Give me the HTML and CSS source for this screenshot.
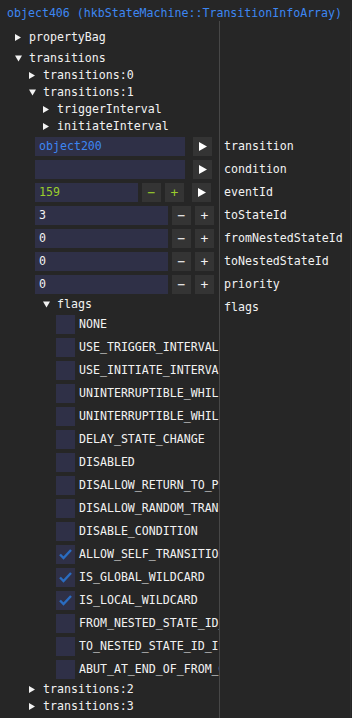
FILE: index.html
```html
<!DOCTYPE html>
<html lang="en">
<head>
  <meta charset="UTF-8" />
  <title>TransitionInfoArray</title>
  <link rel="stylesheet" href="styles.css">
</head>
<body>
  <div class="title">object406 (hkbStateMachine::TransitionInfoArray)</div>

  <div class="table">
    <div class="row first">
      <div class="l"><div class="node lv0"><svg class="tri" width="7" height="7" viewBox="0 0 7 7"><polygon points="0,0 6,3.5 0,7"/></svg>propertyBag</div></div>
      <div class="r"></div>
    </div>
    <div class="row">
      <div class="l"><div class="node lv0"><svg class="tri" width="7" height="7" viewBox="0 0 7 7"><polygon points="0,0.5 7,0.5 3.5,6.5"/></svg>transitions</div></div>
      <div class="r"></div>
    </div>
    <div class="row">
      <div class="l"><div class="node lv1"><svg class="tri" width="7" height="7" viewBox="0 0 7 7"><polygon points="0,0 6,3.5 0,7"/></svg>transitions:0</div></div>
      <div class="r"></div>
    </div>
    <div class="row">
      <div class="l"><div class="node lv1"><svg class="tri" width="7" height="7" viewBox="0 0 7 7"><polygon points="0,0.5 7,0.5 3.5,6.5"/></svg>transitions:1</div></div>
      <div class="r"></div>
    </div>
    <div class="row">
      <div class="l"><div class="node lv2"><svg class="tri" width="7" height="7" viewBox="0 0 7 7"><polygon points="0,0 6,3.5 0,7"/></svg>triggerInterval</div></div>
      <div class="r"></div>
    </div>
    <div class="row">
      <div class="l"><div class="node lv2"><svg class="tri" width="7" height="7" viewBox="0 0 7 7"><polygon points="0,0 6,3.5 0,7"/></svg>initiateInterval</div></div>
      <div class="r"></div>
    </div>

    <!-- fields -->
    <div class="row">
      <div class="l"><div class="field">
        <div class="input link w-long">object200</div>
        <div class="btn play"><svg width="8" height="9" viewBox="0 0 8 9"><polygon points="0,0 8,4.5 0,9"/></svg></div>
      </div></div>
      <div class="r label">transition</div>
    </div>
    <div class="row">
      <div class="l"><div class="field">
        <div class="input w-long"></div>
        <div class="btn play"><svg width="8" height="9" viewBox="0 0 8 9"><polygon points="0,0 8,4.5 0,9"/></svg></div>
      </div></div>
      <div class="r label">condition</div>
    </div>
    <div class="row">
      <div class="l"><div class="field">
        <div class="input num w-short">159</div>
        <div class="btn num">−</div>
        <div class="btn num">+</div>
        <div class="btn play"><svg width="8" height="9" viewBox="0 0 8 9"><polygon points="0,0 8,4.5 0,9"/></svg></div>
      </div></div>
      <div class="r label">eventId</div>
    </div>
    <div class="row">
      <div class="l"><div class="field">
        <div class="input w-mid">3</div>
        <div class="btn">−</div>
        <div class="btn">+</div>
      </div></div>
      <div class="r label">toStateId</div>
    </div>
    <div class="row">
      <div class="l"><div class="field">
        <div class="input w-mid">0</div>
        <div class="btn">−</div>
        <div class="btn">+</div>
      </div></div>
      <div class="r label">fromNestedStateId</div>
    </div>
    <div class="row">
      <div class="l"><div class="field">
        <div class="input w-mid">0</div>
        <div class="btn">−</div>
        <div class="btn">+</div>
      </div></div>
      <div class="r label">toNestedStateId</div>
    </div>
    <div class="row">
      <div class="l"><div class="field">
        <div class="input w-mid">0</div>
        <div class="btn">−</div>
        <div class="btn">+</div>
      </div></div>
      <div class="r label">priority</div>
    </div>

    <!-- flags -->
    <div class="row">
      <div class="l"><div class="node lv2"><svg class="tri" width="7" height="7" viewBox="0 0 7 7"><polygon points="0,0.5 7,0.5 3.5,6.5"/></svg>flags</div></div>
      <div class="r flags-label">flags</div>
    </div>
    <div class="row"><div class="l"><div class="check"><span class="box"></span>NONE</div></div><div class="r"></div></div>
    <div class="row"><div class="l"><div class="check"><span class="box"></span>USE_TRIGGER_INTERVAL</div></div><div class="r"></div></div>
    <div class="row"><div class="l"><div class="check"><span class="box"></span>USE_INITIATE_INTERVAL</div></div><div class="r"></div></div>
    <div class="row"><div class="l"><div class="check"><span class="box"></span>UNINTERRUPTIBLE_WHILE_PLAYING</div></div><div class="r"></div></div>
    <div class="row"><div class="l"><div class="check"><span class="box"></span>UNINTERRUPTIBLE_WHILE_DELAYED</div></div><div class="r"></div></div>
    <div class="row"><div class="l"><div class="check"><span class="box"></span>DELAY_STATE_CHANGE</div></div><div class="r"></div></div>
    <div class="row"><div class="l"><div class="check"><span class="box"></span>DISABLED</div></div><div class="r"></div></div>
    <div class="row"><div class="l"><div class="check"><span class="box"></span>DISALLOW_RETURN_TO_PREVIOUS_STATE</div></div><div class="r"></div></div>
    <div class="row"><div class="l"><div class="check"><span class="box"></span>DISALLOW_RANDOM_TRANSITION</div></div><div class="r"></div></div>
    <div class="row"><div class="l"><div class="check"><span class="box"></span>DISABLE_CONDITION</div></div><div class="r"></div></div>
    <div class="row"><div class="l"><div class="check"><span class="box"><svg width="19" height="19" viewBox="0 0 19 19"><polyline points="4,9.5 7.5,13 15,5"/></svg></span>ALLOW_SELF_TRANSITION_BY_TRANSITION_FROM_ANY_STATE</div></div><div class="r"></div></div>
    <div class="row"><div class="l"><div class="check"><span class="box"><svg width="19" height="19" viewBox="0 0 19 19"><polyline points="4,9.5 7.5,13 15,5"/></svg></span>IS_GLOBAL_WILDCARD</div></div><div class="r"></div></div>
    <div class="row"><div class="l"><div class="check"><span class="box"><svg width="19" height="19" viewBox="0 0 19 19"><polyline points="4,9.5 7.5,13 15,5"/></svg></span>IS_LOCAL_WILDCARD</div></div><div class="r"></div></div>
    <div class="row"><div class="l"><div class="check"><span class="box"></span>FROM_NESTED_STATE_ID_IS_LOCAL</div></div><div class="r"></div></div>
    <div class="row"><div class="l"><div class="check"><span class="box"></span>TO_NESTED_STATE_ID_IS_LOCAL</div></div><div class="r"></div></div>
    <div class="row"><div class="l"><div class="check"><span class="box"></span>ABUT_AT_END_OF_FROM_GENERATOR</div></div><div class="r"></div></div>

    <div class="row">
      <div class="l"><div class="node lv1"><svg class="tri" width="7" height="7" viewBox="0 0 7 7"><polygon points="0,0 6,3.5 0,7"/></svg>transitions:2</div></div>
      <div class="r"></div>
    </div>
    <div class="row">
      <div class="l"><div class="node lv1"><svg class="tri" width="7" height="7" viewBox="0 0 7 7"><polygon points="0,0 6,3.5 0,7"/></svg>transitions:3</div></div>
      <div class="r"></div>
    </div>
    <div class="row fill">
      <div class="l"></div>
      <div class="r"></div>
    </div>
  </div>
</body>
</html>
```

FILE: styles.css
```css
:root {
  --bg-color: #262626;
  --text-color: #f2f2f2;
  --frame-bg: #2f3047;
  --button-bg: #343434;
  --column-line: #474747;
  --link-color: #3d86f2;
  --num-color: #9acd2c;
  --check-color: #2a6cc0;
}

* {
  box-sizing: border-box;
  margin: 0;
  padding: 0;
}

body {
  width: 352px;
  height: 718px;
  overflow: hidden;
  display: flex;
  flex-direction: column;
  background-color: var(--bg-color);
  color: var(--text-color);
  font-family: 'DejaVu Sans Mono', monospace;
  font-size: 11.6px;
  line-height: 13px;
}

.title {
  flex-shrink: 0;
  height: 21px;
  padding: 7px 7px 0;
  color: var(--link-color);
  white-space: nowrap;
}

.table {
  flex: 1;
  width: 351px;
  display: flex;
  flex-direction: column;
}

.row {
  flex-shrink: 0;
  display: grid;
  grid-template-columns: 220px 1fr;
}

.row > div {
  padding-bottom: 4px;
}

.row.first > div {
  padding-top: 10px;
  padding-bottom: 8px;
}

.row.fill {
  flex: 1;
}

.l {
  border-right: 1px solid var(--column-line);
  overflow: hidden;
  white-space: nowrap;
}

.r {
  padding-left: 4px;
  border-right: 1px solid #2d2d2d;
  white-space: nowrap;
}

.label {
  line-height: 19px;
}

.row > .flags-label {
  padding-top: 3px;
  padding-bottom: 1px;
}

/* tree nodes */
.node {
  display: flex;
  align-items: center;
  height: 13px;
}

.node.lv0 { padding-left: 15px; }
.node.lv1 { padding-left: 29px; }
.node.lv2 { padding-left: 43px; }

.tri {
  width: 14px;
  padding-right: 7px;
  fill: var(--text-color);
  flex-shrink: 0;
}

/* field rows */
.field {
  display: flex;
  gap: 4px;
  height: 19px;
  padding-left: 35px;
}

.input {
  height: 19px;
  padding-left: 4px;
  line-height: 19px;
  background-color: var(--frame-bg);
}

.w-long { width: 150px; }
.w-mid { width: 133px; }
.w-short { width: 103px; }

.input.link {
  color: var(--link-color);
}

.input.num, .btn.num {
  color: var(--num-color);
}

.btn {
  width: 19px;
  height: 19px;
  display: flex;
  align-items: center;
  justify-content: center;
  background-color: var(--button-bg);
  font-size: 13px;
}

.btn.play {
  margin-left: 4px;
  fill: #ffffff;
}

/* flag checkboxes */
.check {
  display: flex;
  align-items: center;
  gap: 4px;
  height: 19px;
  padding-left: 56px;
}

.box {
  width: 19px;
  height: 19px;
  flex-shrink: 0;
  background-color: var(--frame-bg);
}

.box svg {
  display: block;
  fill: none;
  stroke: var(--check-color);
  stroke-width: 2.4;
}
```
